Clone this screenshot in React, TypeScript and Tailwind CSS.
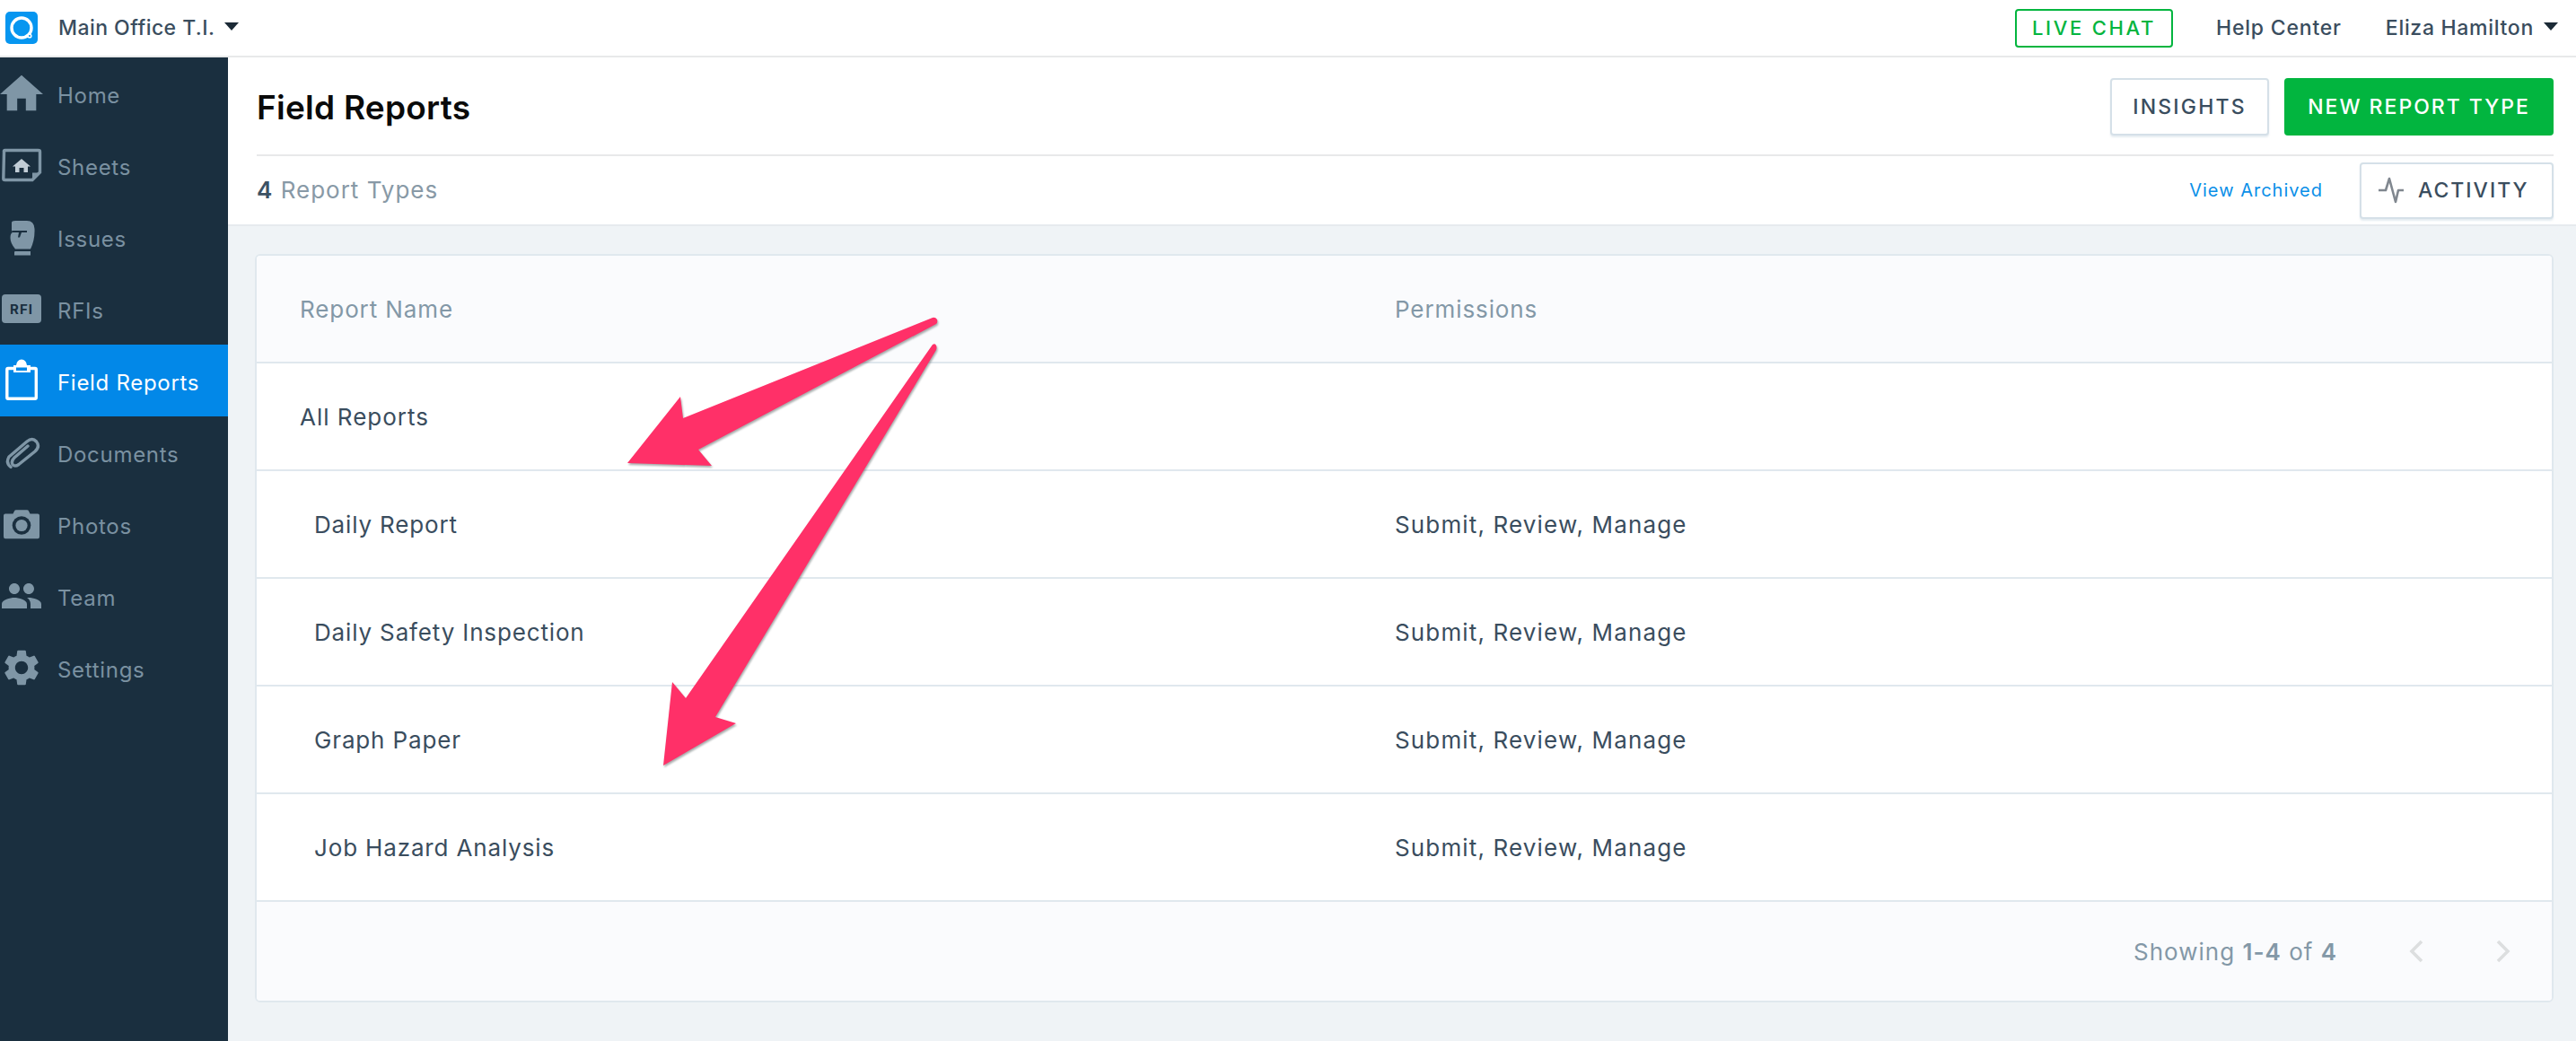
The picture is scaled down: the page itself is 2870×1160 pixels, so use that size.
import React from "react";
import { MdPeople, MdSettings } from "react-icons/md";

function Caret({ className = "" }: { className?: string }) {
  return (
    <svg width="16" height="9" viewBox="0 0 16 9" className={className}>
      <path d="M0 0H16L8 9Z" fill="#1b2a36" />
    </svg>
  );
}

const ic = "#7f96a6";

const HomeIcon = () => (
  <svg width="48" height="48" viewBox="0 0 50 48"><path d="M25 3 L50 25 H42 V44 H30 V30 H20 V44 H8 V25 H0 Z" fill={ic} /></svg>
);
const SheetsIcon = () => (
  <svg width="48" height="48" viewBox="0 0 48 48">
    <path d="M4.5 9 Q4 7.5 5.5 7.5 H42.5 Q44.5 7.5 44.5 9 V32 L36 40.5 H5.5 Q3.8 40.5 3.8 39 Z" fill="none" stroke={ic} strokeWidth="3.4" />
    <path d="M36 32.5 H44 L36 40.5Z" fill={ic} />
    <path d="M24 17 L34 25.5 H31 V32 H26.5 V27 H21.5 V32 H17 V25.5 H14 Z" fill="#c1cdd6" />
  </svg>
);
const GloveIcon = () => (
  <svg width="48" height="48" viewBox="0 0 48 48">
    <path d="M13 8 Q13 6 17 6 H30 Q38 6 38.5 15 Q39 27 34 37.5 H17 Q11.5 31 11.5 25 Q11.5 20 14 19 L13 17 Z" fill={ic} />
    <path d="M16 44.5 V41 Q16 40 17 40 H34 V44.5 Z" fill={ic} />
    <path d="M13 17 H30 V19 H24 L22 24.5 H20 L21 19 H14 Z" fill="#1a2f3f" />
  </svg>
);
const ClipIcon = () => (
  <svg width="48" height="48" viewBox="0 0 48 48">
    <path d="M16 10.5 H9 Q7.8 10.5 7.8 12 V43 Q7.8 44.3 9 44.3 H39 Q40.3 44.3 40.3 43 V12 Q40.3 10.5 39 10.5 H32" fill="none" stroke="#fff" strokeWidth="3.4" />
    <path d="M15 7 H18 Q19 0.5 24 0.5 Q29 0.5 30 7 H34 V15 H15 Z" fill="#fff" />
    <rect x="18" y="9.5" width="12" height="3.5" fill="#0288e8" />
  </svg>
);
const PaperclipIcon = () => (
  <svg width="48" height="48" viewBox="0 0 48 48">
    <path d="M12 40.5 Q6 36 10 29 L30 12 Q36 7 40.5 12 Q45 17.5 39 23 L21 37.5 Q16.5 40.5 14 37.5 Q12 34 16 30 L31 17" fill="none" stroke={ic} strokeWidth="3.4" strokeLinecap="round" />
  </svg>
);
const CameraIcon = () => (
  <svg width="48" height="48" viewBox="0 0 48 48">
    <path d="M6 12.5 H14.5 L16 9.5 Q16.5 8.2 18 8.2 H30 Q31.5 8.2 32 9.5 L33.5 12.5 H42 Q44 12.5 44 14.5 V38 Q44 40.2 42 40.2 H6 Q4 40.2 4 38 V14.5 Q4 12.5 6 12.5Z" fill={ic} />
    <circle cx="24" cy="25.5" r="10.3" fill="#1a2f3f" />
    <circle cx="24" cy="25.5" r="6.6" fill={ic} />
  </svg>
);
const ActivityIcon = () => (
  <svg width="30" height="30" viewBox="0 0 30 30">
    <path d="M1 15 H9 L13 2 L20 28 L23 15 H29" fill="none" stroke="#80878f" strokeWidth="2.6" strokeLinejoin="round" />
  </svg>
);
const Chevron = ({ left }: { left?: boolean }) => (
  <svg width="16" height="26" viewBox="0 0 16 26">
    <path d={left ? "M14 2 L3 13 L14 24" : "M2 2 L13 13 L2 24"} fill="none" stroke="#dcdedf" strokeWidth="3.6" />
  </svg>
);

const nav: { label: string; icon: React.ReactNode; active?: boolean }[] = [
  { label: "Home", icon: <HomeIcon /> },
  { label: "Sheets", icon: <SheetsIcon /> },
  { label: "Issues", icon: <GloveIcon /> },
  {
    label: "RFIs",
    icon: (
      <div className="flex h-[32px] w-[44px] items-center justify-center rounded-[4px] bg-[#7f96a6] text-[15px] font-bold leading-none tracking-[1px] text-[#1a2f3f]">
        RFI
      </div>
    ),
  },
  { label: "Field Reports", icon: <ClipIcon />, active: true },
  { label: "Documents", icon: <PaperclipIcon /> },
  { label: "Photos", icon: <CameraIcon /> },
  { label: "Team", icon: <MdPeople size={48} color={ic} /> },
  { label: "Settings", icon: <MdSettings size={48} color={ic} /> },
];

const rows = ["Daily Report", "Daily Safety Inspection", "Graph Paper", "Job Hazard Analysis"];

export default function App() {
  return (
    <div className="relative flex h-screen w-full flex-col overflow-hidden bg-[#eff3f6] font-['Inter',sans-serif] text-[#3a4d5e] [font-optical-sizing:none]">
      <header className="flex h-[64px] shrink-0 items-center justify-between border-b-2 border-[#e8e9ea] bg-white pl-[6px] pr-[20px]">
        <div className="flex items-center">
          <svg width="36" height="36" viewBox="0 0 36 36">
            <rect width="36" height="36" rx="5" fill="#0796f0" />
            <circle cx="18" cy="18" r="11" fill="none" stroke="#fff" strokeWidth="3.4" />
            <circle cx="27" cy="27" r="2.6" fill="#fff" />
            <circle cx="27" cy="27" r="1.1" fill="#0796f0" />
          </svg>
          <span className="ml-[23px] text-[23px] font-medium leading-none tracking-[0.45px]">Main Office T.I.</span>
          <Caret className="ml-[11px] mb-[3px]" />
        </div>
        <div className="flex items-center">
          <div className="flex h-[43px] w-[176px] items-center justify-center rounded-[4px] border-2 border-[#04b53f] text-[22px] font-medium tracking-[2.7px] text-[#04b53f]">
            LIVE CHAT
          </div>
          <span className="ml-[48px] text-[23px] font-medium leading-none tracking-[0.8px]">Help Center</span>
          <span className="ml-[49px] text-[23px] font-medium leading-none tracking-[0.7px]">Eliza Hamilton</span>
          <Caret className="ml-[11px] mb-[3px]" />
        </div>
      </header>
      <div className="flex min-h-0 flex-1">
        <aside className="w-[254px] shrink-0 bg-[#1a2f3f]">
          {nav.map((n) => (
            <div key={n.label} className={`flex h-[80px] items-center ${n.active ? "bg-[#0288e8] text-white" : "text-[#7a91a1]"}`}>
              <div className="flex h-[48px] w-[48px] shrink-0 items-center justify-center">{n.icon}</div>
              <span className="ml-[16px] pt-[6px] text-[24px] leading-none tracking-[0.7px]">{n.label}</span>
            </div>
          ))}
        </aside>
        <main className="flex min-w-0 flex-1 flex-col">
          <div className="shrink-0 border-b-2 border-[#e6eaee] bg-white px-[32px] pr-[25px]">
            <div className="flex h-[110px] items-center justify-between border-b-2 border-[#e8e9ea] pt-[2px]">
              <h1 className="text-[37px] font-semibold leading-none tracking-[0.25px] text-[#0a0a0a]">Field Reports</h1>
              <div className="flex items-center gap-[17px]">
                <button className="flex h-[64px] w-[177px] items-center justify-center rounded-[4px] border-2 border-[#d5e0e8] bg-white text-[23px] font-medium tracking-[2.2px] shadow-[0_2px_2px_rgba(180,200,215,0.35)]">
                  INSIGHTS
                </button>
                <button className="flex h-[64px] w-[300px] items-center justify-center rounded-[4px] bg-[#02b53f] text-[23px] font-medium tracking-[2px] text-white">
                  NEW REPORT TYPE
                </button>
              </div>
            </div>
            <div className="flex h-[76px] items-center justify-between">
              <div className="text-[26px] leading-none tracking-[1px] text-[#8899a6]">
                <b className="font-semibold text-[#3c5264]">4</b> Report Types
              </div>
              <div className="flex items-center">
                <a className="text-[20px] tracking-[1px] text-[#0a8fe8]">View Archived</a>
                <button className="ml-[41px] flex h-[63px] w-[216px] items-center justify-start rounded-[4px] border-2 border-[#d5e0e8] bg-white pl-[18px] text-[23px] font-medium tracking-[2px] shadow-[0_2px_2px_rgba(180,200,215,0.35)]">
                  <ActivityIcon />
                  <span className="ml-[15px]">ACTIVITY</span>
                </button>
              </div>
            </div>
          </div>
          <div className="px-[30px] pt-[31px] pr-[25px]">
            <div className="overflow-hidden rounded-[6px] border-2 border-[#e0e8ee] bg-white">
              <div className="flex h-[118px] items-center bg-[#fafbfd] pl-[48px] text-[26px] tracking-[0.9px] text-[#8398a7]">
                <span className="w-[1220px]">Report Name</span>
                <span>Permissions</span>
              </div>
              <div className="flex h-[120px] items-center border-t-2 border-[#e0e8ee] pl-[48px] text-[26px] tracking-[1px]">All Reports</div>
              {rows.map((r) => (
                <div key={r} className="flex h-[120px] items-center border-t-2 border-[#e0e8ee] pl-[64px] text-[26px] tracking-[0.85px]">
                  <span className="w-[1204px]">{r}</span>
                  <span className="tracking-[1.15px]">Submit, Review, Manage</span>
                </div>
              ))}
              <div className="flex h-[112px] items-center justify-end border-t-2 border-[#e0e8ee] bg-[#fafbfd] pr-[46px] text-[26px] tracking-[1px] text-[#8398a7]">
                <span>
                  Showing <b className="font-semibold">1-4</b> of <b className="font-semibold">4</b>
                </span>
                <span className="ml-[80px]"><Chevron left /></span>
                <span className="ml-[81px]"><Chevron /></span>
              </div>
            </div>
          </div>
        </main>
      </div>
      <svg width="2870" height="1160" viewBox="0 0 2870 1160" className="pointer-events-none absolute left-0 top-0 drop-shadow-[1px_2px_1px_rgba(60,70,70,0.45)]">
        <path d="M1039 354 Q1042 353 1044 356 Q1045 359 1043 361 L778 501 L793 519 L699 516 L758 442 L761 466 Z" fill="#ff3068" />
        <path d="M1039 384 Q1042 382 1043 385 Q1044 387 1043 390 L797 799 L820 806 L739 853 L749 760 L764 778 Z" fill="#ff3068" />
      </svg>
    </div>
  );
}
